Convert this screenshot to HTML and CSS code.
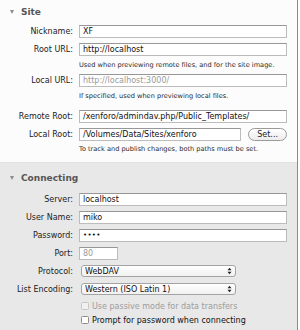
FILE: index.html
```html
<!DOCTYPE html>
<html>
<head>
<meta charset="utf-8">
<link rel="stylesheet" href="styles.css">
</head>
<body>
<div class="pane">
  <section class="sec sec-site">
    <div class="head"><span class="tri"></span><span class="head-text">Site</span></div>
    <div class="row"><span class="lbl">Nickname:</span><div class="input">XF</div></div>
    <div class="row"><span class="lbl">Root URL:</span><div class="input">http://localhost</div></div>
    <p class="hint">Used when previewing remote files, and for the site image.</p>
    <div class="row"><span class="lbl">Local URL:</span><div class="input ph">http://localhost:3000/</div></div>
    <p class="hint">If specified, used when previewing local files.</p>
    <div class="row group"><span class="lbl">Remote Root:</span><div class="input">/xenforo/admindav.php/Public_Templates/</div></div>
    <div class="row"><span class="lbl">Local Root:</span><div class="input short">/Volumes/Data/Sites/xenforo</div><div class="btn">Set...</div></div>
    <p class="hint hint-last">To track and publish changes, both paths must be set.</p>
  </section>
  <section class="sec sec-conn">
    <div class="head"><span class="tri"></span><span class="head-text">Connecting</span></div>
    <div class="row"><span class="lbl">Server:</span><div class="input">localhost</div></div>
    <div class="row"><span class="lbl">User Name:</span><div class="input">miko</div></div>
    <div class="row"><span class="lbl">Password:</span><div class="input pw">&#8226;&#8226;&#8226;&#8226;</div></div>
    <div class="row"><span class="lbl">Port:</span><div class="input port ph">80</div></div>
    <div class="row prow first"><span class="lbl">Protocol:</span><div class="popup"><span class="popup-text">WebDAV</span><svg class="arrows" width="5" height="8" viewBox="0 0 5 8"><path d="M0.5 3.2 L2.5 0.8 L4.5 3.2 Z M0.5 4.8 L2.5 7.2 L4.5 4.8 Z" fill="#222"/></svg></div></div>
    <div class="row prow"><span class="lbl">List Encoding:</span><div class="popup"><span class="popup-text">Western (ISO Latin 1)</span><svg class="arrows" width="5" height="8" viewBox="0 0 5 8"><path d="M0.5 3.2 L2.5 0.8 L4.5 3.2 Z M0.5 4.8 L2.5 7.2 L4.5 4.8 Z" fill="#222"/></svg></div></div>
    <div class="check disabled"><span class="box"></span><span>Use passive mode for data transfers</span></div>
    <div class="check"><span class="box"></span><span>Prompt for password when connecting</span></div>
  </section>
</div>
</body>
</html>
```
FILE: styles.css
```css
html, body {
  margin: 0;
  padding: 0;
  background: #ffffff;
}
body {
  font-family: "DejaVu Sans", "Liberation Sans", sans-serif;
  font-size: 8px;
  color: #1e1e1e;
}
.pane {
  width: 297px;
  height: 330px;
  border-right: 1px solid #8a8a8a;
  display: flex;
  flex-direction: column;
}
.sec {
  padding-right: 10px;
}
.sec-site {
  background: #fcfcfc;
  height: 162px;
  padding-top: 5px;
  box-sizing: border-box;
}
.sec-conn {
  background: #e8e8e8;
  flex: 1;
  padding-top: 8px;
  border-top: 1px solid #e2e2e2;
}
.head {
  display: flex;
  align-items: center;
  height: 13px;
}
.tri {
  width: 0;
  height: 0;
  margin-left: 10px;
  margin-right: 7px;
  border-left: 2.5px solid transparent;
  border-right: 2.5px solid transparent;
  border-top: 4px solid #8c8c8c;
}
.head-text {
  font-weight: bold;
  font-size: 9px;
  color: #555;
}
.sec-site .head {
  margin-bottom: 7px;
}
.sec-conn .head {
  margin-bottom: 9px;
}
.row {
  display: flex;
  align-items: center;
  height: 13px;
  margin-bottom: 5px;
}
.lbl {
  width: 73px;
  padding-right: 6px;
  text-align: right;
  flex: none;
  color: #222;
}
.input {
  box-sizing: border-box;
  width: 208px;
  height: 13px;
  border: 1px solid #bcbcbc;
  border-top-color: #979797;
  background: #fff;
  padding-left: 3px;
  line-height: 11px;
  white-space: nowrap;
  overflow: hidden;
  color: #111;
}
.input.short {
  width: 163px;
}
.input.port {
  width: 39px;
}
.input.pw {
  font-size: 7px;
  letter-spacing: 0.3px;
}
.ph {
  color: #9a9a9a;
}
.btn {
  box-sizing: border-box;
  margin-left: 7px;
  width: 39px;
  height: 13px;
  border: 1px solid #9a9a9a;
  border-radius: 7px;
  background: linear-gradient(#ffffff, #ececec);
  text-align: center;
  line-height: 11px;
  color: #222;
}
.hint {
  margin: -1px 0 4px 79px;
  font-size: 6.6px;
  line-height: 10px;
  color: #2a2a2a;
  white-space: nowrap;
}
.group {
  margin-top: 9px;
}
.hint-last {
  margin-top: -2px;
}
.prow {
  height: 12px;
  margin-bottom: 6px;
}
.prow.first {
  margin-top: 1px;
}
.popup {
  box-sizing: border-box;
  margin-left: 2px;
  width: 155px;
  height: 12px;
  border: 1px solid #a4a4a4;
  border-radius: 3px;
  background: linear-gradient(#ffffff, #f1f1f1);
  display: flex;
  align-items: center;
  justify-content: space-between;
  padding-left: 3px;
  padding-right: 3px;
  color: #111;
}
.arrows {
  display: block;
}
.check {
  display: flex;
  align-items: center;
  height: 14px;
  margin-left: 81px;
  color: #111;
}
.check .box {
  box-sizing: border-box;
  width: 8px;
  height: 8px;
  border: 1px solid #8e8e8e;
  border-radius: 1.5px;
  background: #fff;
  margin-right: 3px;
}
.check.disabled {
  color: #9c9c9c;
  margin-top: -2px;
}
.check.disabled .box {
  border-color: #c8c8c8;
  background: #f0f0f0;
}
```
